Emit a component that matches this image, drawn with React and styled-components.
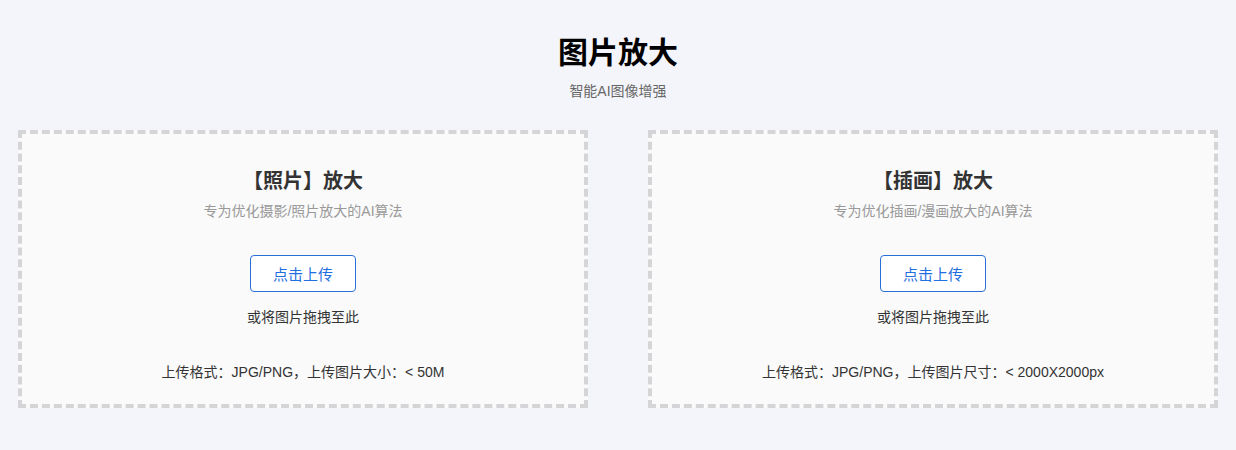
import React from 'react';
import styled, { createGlobalStyle } from 'styled-components';

const cards = [
    {
        title: '【照片】放大',
        desc: '专为优化摄影/照片放大的AI算法',
        limit: '上传格式：JPG/PNG，上传图片大小：< 50M',
    },
    {
        title: '【插画】放大',
        desc: '专为优化插画/漫画放大的AI算法',
        limit: '上传格式：JPG/PNG，上传图片尺寸：< 2000X2000px',
    },
];

function App() {
    return (
        <>
            <Global />
            <Page>
                <Header>
                    <H1>图片放大</H1>
                    <Sub>智能AI图像增强</Sub>
                </Header>
                <Cards>
                    {cards.map((c) => (
                        <Drop key={c.title}>
                            <CardTitle>{c.title}</CardTitle>
                            <CardDesc>{c.desc}</CardDesc>
                            <UploadBtn type="button">点击上传</UploadBtn>
                            <Hint>或将图片拖拽至此</Hint>
                            <Limit>{c.limit}</Limit>
                        </Drop>
                    ))}
                </Cards>
            </Page>
        </>
    );
}

export default App;

const Global = createGlobalStyle`
    html, body {
        margin: 0;
        padding: 0;
        background: #f4f5fa;
    }

    body {
        font-family: 'Liberation Sans', 'Noto Sans CJK SC', sans-serif;
        color: #333;
    }
`;

const Page = styled.div`
    padding: 0 18px;
`;

const Header = styled.header`
    display: flex;
    flex-direction: column;
    align-items: center;
    padding-top: 33px;
`;

const H1 = styled.h1`
    margin: 0;
    font-size: 30px;
    line-height: 40px;
    font-weight: 700;
    color: #000;
`;

const Sub = styled.p`
    margin: 8px 0 0;
    font-size: 14px;
    line-height: 20px;
    color: #666;
`;

const Cards = styled.div`
    display: grid;
    grid-template-columns: 1fr 1fr;
    gap: 60px;
    margin-top: 29px;
`;

const Drop = styled.div`
    display: flex;
    flex-direction: column;
    align-items: center;
    height: 278px;
    box-sizing: border-box;
    border: 4px dashed #d5d5d7;
    background: #fafafa;
    padding-top: 33px;
`;

const CardTitle = styled.h2`
    margin: 0;
    font-size: 20px;
    line-height: 28px;
    font-weight: 700;
    color: #333;
`;

const CardDesc = styled.p`
    margin: 6px 0 0;
    font-size: 14px;
    line-height: 20px;
    color: #999;
`;

const UploadBtn = styled.button`
    margin-top: 34px;
    width: 106px;
    height: 37px;
    border: 1px solid #2a6fd6;
    border-radius: 4px;
    background: #fff;
    color: #1f6fe0;
    font-family: inherit;
    font-size: 15px;
    cursor: pointer;
`;

const Hint = styled.p`
    margin: 15px 0 0;
    font-size: 14px;
    line-height: 20px;
    color: #333;
`;

const Limit = styled.p`
    margin: 35px 0 0;
    font-size: 14px;
    line-height: 20px;
    color: #333;
`;
